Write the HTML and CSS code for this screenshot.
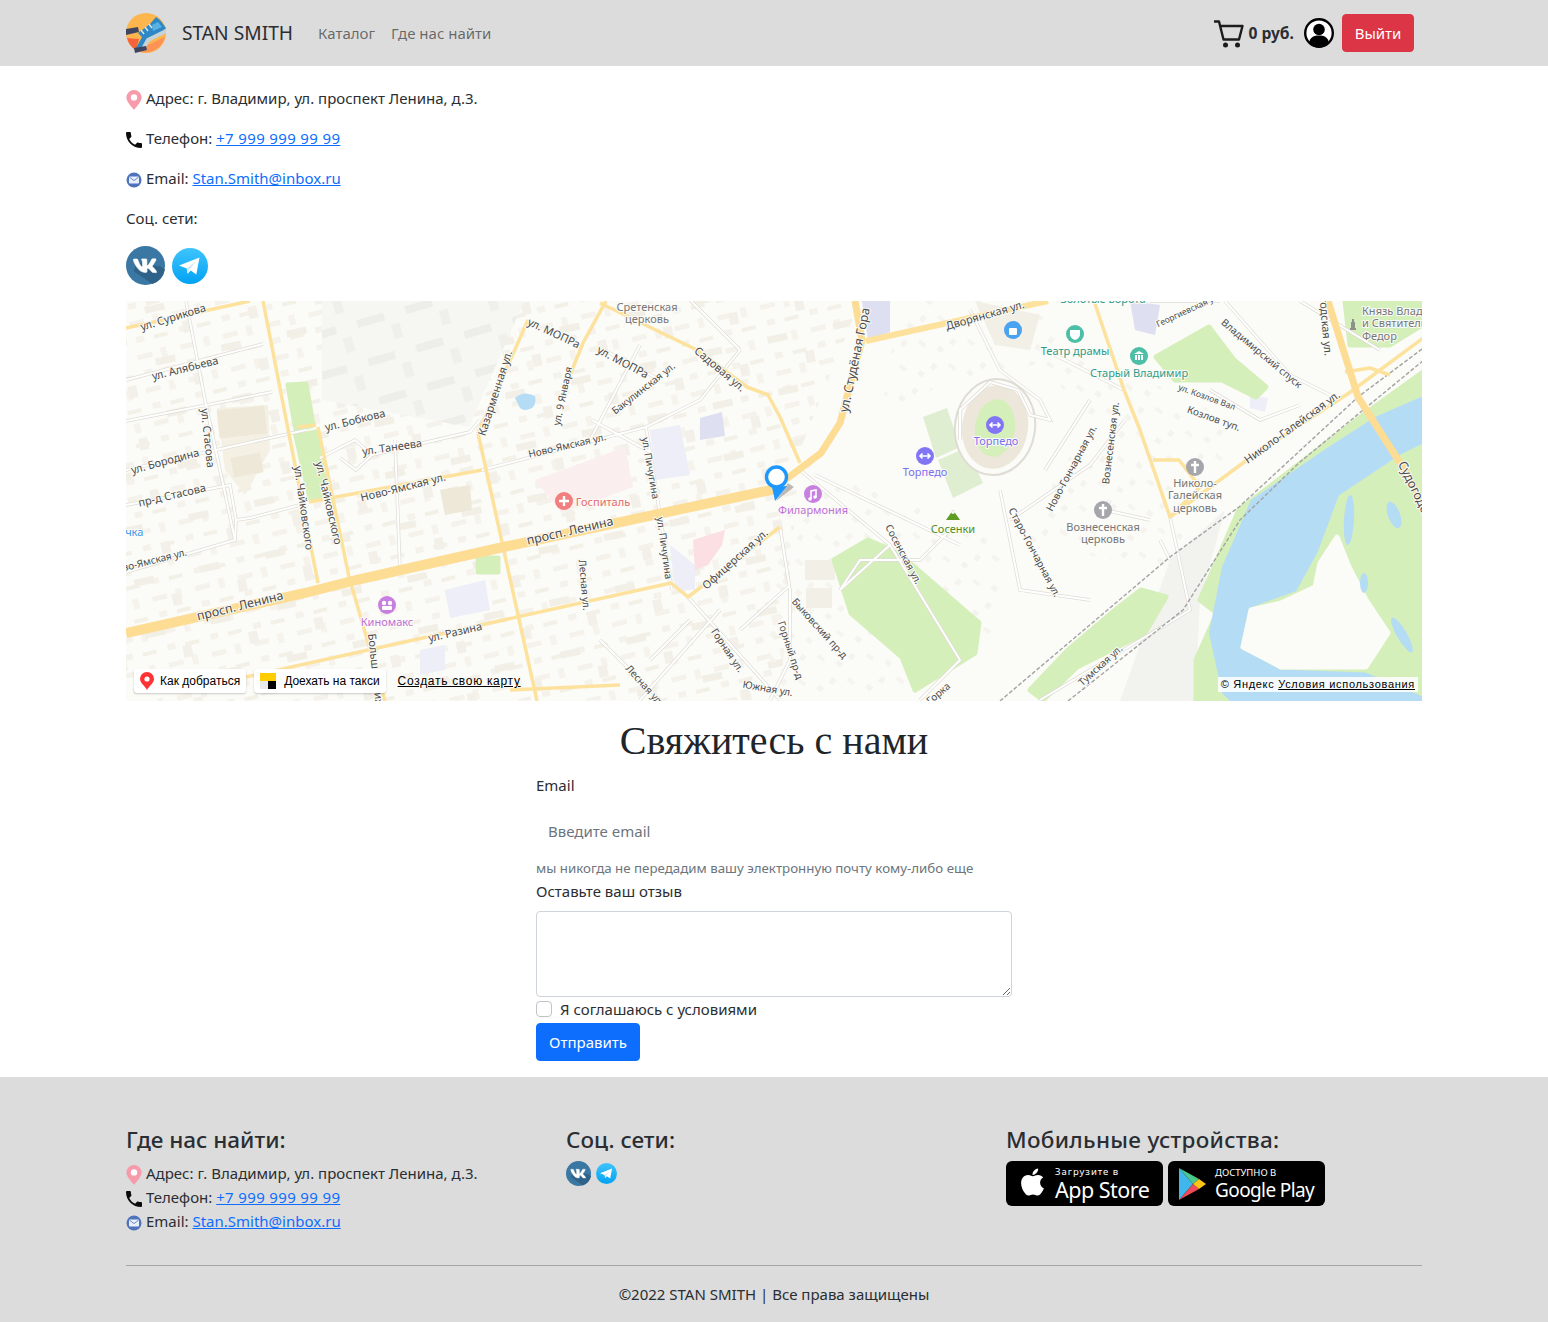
FILE: index.html
```html
<!DOCTYPE html>
<html lang="ru">
<head>
<meta charset="utf-8">
<title>STAN SMITH</title>
<link rel="stylesheet" href="styles.css">
</head>
<body>
<svg class="sprite" width="0" height="0" aria-hidden="true">
  <defs>
    <linearGradient id="tgGrad" x1="0" y1="0" x2="0" y2="1"><stop offset="0" stop-color="#3fc4fd"/><stop offset="1" stop-color="#02a2f3"/></linearGradient>
    <symbol id="i-pin" viewBox="0 0 16 20"><path fill="#f79aaa" d="M8 0a7.600 7.600 0 0 0-7.600 7.600C.4 12 5.500 16.600 8 20c2.500-3.400 7.600-8 7.600-12.400A7.600 7.600 0 0 0 8 0z"/><circle cx="8" cy="7.400" r="3.200" fill="#fff"/></symbol>
    <symbol id="i-phone" viewBox="3 3 18 18"><path fill="#0b0b0b" d="M6.620 10.790c1.440 2.830 3.760 5.140 6.590 6.590l2.200-2.200c.27-.27.67-.36 1.020-.24 1.120.37 2.330.57 3.570.57.550 0 1 .45 1 1V20c0 .55-.45 1-1 1-9.390 0-17-7.610-17-17 0-.55.45-1 1-1h3.500c.55 0 1 .45 1 1 0 1.250.2 2.450.57 3.570.11.35.03.74-.25 1.020l-2.200 2.200z"/></symbol>
    <symbol id="i-mail" viewBox="0 0 16 16"><circle cx="8" cy="8" r="7.500" fill="#4f72bd"/><rect x="3" y="4.600" width="10" height="7" rx="1" fill="#e8eefb"/><path d="M3.300 5l4.700 3.600L12.700 5" fill="none" stroke="#6d8cce" stroke-width="1"/></symbol>
    <symbol id="i-vk" viewBox="0 0 40 40"><circle cx="20" cy="20" r="20" fill="#3a77a3"/><path fill="#2f6288" d="M8 26l3-9 24 4 5 3a20 20 0 0 1-13 15z"/><g transform="translate(-1.900 -1.800) scale(1.780)"><path fill="#fff" stroke="#fff" stroke-width=".35" d="M18.150 16.270h-1.460c-.55 0-.72-.44-1.710-1.440-.86-.83-1.240-.94-1.450-.94-.3 0-.38.08-.38.49v1.310c0 .35-.11.56-1.050.56-1.550 0-3.270-.94-4.480-2.690C5.800 11.100 5.310 9.280 5.310 8.910c0-.21.08-.4.49-.4h1.460c.37 0 .51.16.65.56.72 2.090 1.920 3.920 2.410 3.920.19 0 .27-.08.27-.56v-2.210c-.06-1-.59-1.090-.59-1.440 0-.17.14-.34.37-.34h2.300c.31 0 .42.16.42.53v2.880c0 .31.14.42.23.42.19 0 .34-.11.68-.45 1.050-1.180 1.800-3 1.800-3 .1-.21.27-.41.64-.41h1.460c.44 0 .53.23.44.53-.18.85-1.980 3.380-1.980 3.380-.16.25-.22.37 0 .65.16.21.68.67 1.030 1.070.64.73 1.130 1.350 1.270 1.770.13.43-.09.65-.52.65z"/></g></symbol>
    <symbol id="i-tg" viewBox="0 0 36 36"><circle cx="18" cy="18" r="18" fill="url(#tgGrad)"/><path fill="#fff" d="M7 17.500L27.500 9.500 24.300 26.500 18.800 22.600 15.600 25.800 14.800 20.500z"/><path fill="#cfe8f7" d="M14.800 20.500l9.500-7.400-7 8.600-1.700 4.100z"/></symbol>
  </defs>
</svg>

<nav class="navbar">
  <div class="nav-inner">
    <a class="brand" href="#">
      <svg class="logo" viewBox="0 0 40 40">
        <circle cx="20" cy="20" r="20" fill="#fdb54e"/>
        <path d="M6 34L24 31 39 24A20 20 0 0 1 6 34z" fill="#ff9356"/>
        <path d="M1 25l12 1-3 11A20 20 0 0 1 1 25z" fill="#f8633c"/>
        <path d="M12 20L24 11 30 4l4 3 6 8-4 4-14 6-4 10-8 0 6-11z" fill="#2f88c6"/>
        <path d="M26 12l6-3 4 5-9 4z" fill="#58b1e0"/>
        <path d="M17 36l5-9 18-9" fill="none" stroke="#c5d3d8" stroke-width="4"/>
        <path d="M19 14l3 4M23 11l3 4M15 17l3 4" stroke="#d6e8f2" stroke-width="1.400"/>
        <path d="M0 16l12-2 1 5-13 3zM8 35l12-2 1 4-12 3z" fill="#3e4560"/>
      </svg>
      <span class="brand-name">STAN SMITH</span>
    </a>
    <ul class="nav-links">
      <li><a href="#">Каталог</a></li>
      <li><a href="#">Где нас найти</a></li>
    </ul>
    <div class="nav-right">
      <svg class="cart" viewBox="0 0 30 28"><path d="M0 1.500h5l4.500 18h15.500l3.500-13.500H6.500" fill="none" stroke="#1c1c1c" stroke-width="2.400" stroke-linejoin="round"/><circle cx="11.500" cy="25" r="2.500" fill="#1c1c1c"/><circle cx="23.500" cy="25" r="2.500" fill="#1c1c1c"/></svg>
      <span class="cart-sum">0 руб.</span>
      <svg class="user" viewBox="0 0 30 30"><circle cx="15" cy="15" r="13.800" fill="#fff" stroke="#000" stroke-width="2.400"/><circle cx="15" cy="11.500" r="5.800" fill="#000"/><path d="M5 25c1-6 5-7.500 10-7.500s9 1.500 10 7.500a13 13 0 0 1-20 0z" fill="#000"/></svg>
      <a class="btn btn-danger" href="#">Выйти</a>
    </div>
  </div>
</nav>

<main class="container">
  <p class="info"><svg class="ic"><use href="#i-pin"/></svg>Адрес: г. Владимир, ул. проспект Ленина, д.3.</p>
  <p class="info"><svg class="ic"><use href="#i-phone"/></svg>Телефон: <a class="tel" href="#">+7 999 999 99 99</a></p>
  <p class="info"><svg class="ic"><use href="#i-mail"/></svg>Email: <a href="#">Stan.Smith@inbox.ru</a></p>
  <p class="info">Соц. сети:</p>
  <div class="socials">
    <svg class="vk-big"><use href="#i-vk"/></svg>
    <svg class="tg-big"><use href="#i-tg"/></svg>
  </div>

  <div class="map">
    <svg class="map-svg" viewBox="126 301 1296 400" preserveAspectRatio="none">
      <defs>
        <pattern id="blocksA" width="44" height="34" patternUnits="userSpaceOnUse" patternTransform="rotate(-14)">
          <rect x="3" y="4" width="15" height="5" fill="#f5f2eb"/><rect x="27" y="2" width="6" height="10" fill="#f6f3ed"/><rect x="6" y="20" width="8" height="6" fill="#f5f2eb"/><rect x="24" y="22" width="14" height="4" fill="#f3f0e8"/>
        </pattern>
        <pattern id="blocksA2" width="67" height="53" patternUnits="userSpaceOnUse" patternTransform="rotate(-12)">
          <rect x="10" y="12" width="20" height="7" fill="#f2efe7"/><rect x="44" y="34" width="9" height="12" fill="#f3f0e9"/>
        </pattern>
        <pattern id="blocksB" width="38" height="31" patternUnits="userSpaceOnUse" patternTransform="rotate(38)">
          <rect x="3" y="4" width="6" height="5" fill="#f5f3ee"/><rect x="22" y="11" width="8" height="4" fill="#f6f4ef"/><rect x="9" y="21" width="5" height="6" fill="#f5f3ee"/>
        </pattern>
        <pattern id="blocksC" width="50" height="40" patternUnits="userSpaceOnUse" patternTransform="rotate(-16)">
          <rect x="4" y="6" width="28" height="8" fill="#ededea"/><rect x="36" y="20" width="9" height="15" fill="#efefec"/>
        </pattern>
        <g id="minorRoads" fill="none">
          <path d="M126 380L263 344M126 421L272 392M126 470L306 430M126 505L230 485 236 520 250 518 300 505M126 572L235 540 236 520"/>
          <path d="M186 301L205 400 235 540M320 458L355 440 372 455 356 470 340 458M372 455L470 432M395 440L400 570 520 545M470 432L480 420"/>
          <path d="M482 470L646 427 700 400 740 350M646 427L672 590M640 345L590 440M592 420L650 452M690 300L740 350M604 350L660 380"/>
          <path d="M688 597L780 700M720 610L640 700M740 630L790 585M780 527L790 590 790 660 770 700M660 700L600 640M650 660L690 620"/>
          <path d="M800 470L890 545 960 660 920 700M815 475L960 545M890 545L840 590 860 560 920 560 950 530M1000 490L1020 590 1090 600M1010 520L1090 465 1125 420M1045 470L1090 400M1110 500L1105 510 1150 520"/>
          <path d="M970 310L1000 370 1040 400 1050 420 1030 415 1018 390 990 382 960 410 960 440M1055 355L1124 390M1170 517L1190 610 1040 700M1170 560L1160 540M1210 390L1260 420 1300 405M1225 301L1290 375 1340 400M1150 301L1220 301M1300 301L1380 350"/>
        </g>
      </defs>

      <rect class="m-bg" x="126" y="301" width="1296" height="400"/>
      <polygon fill="url(#blocksA)" points="126,301 860,301 800,450 780,700 126,701"/>
      <polygon fill="url(#blocksA2)" points="126,301 860,301 800,450 780,700 126,701"/>
      <polygon fill="url(#blocksB)" points="780,450 1000,540 1000,640 880,701 760,701"/>
      <polygon fill="url(#blocksB)" points="1020,340 1200,400 1240,450 1160,570 1020,540 1090,420"/>
      <polygon fill="url(#blocksB)" points="900,301 1050,301 1060,360 950,380 880,420"/>
      <polygon class="m-gray" points="322,301 524,301 469,427 322,400"/>
      <polygon fill="url(#blocksC)" points="322,301 524,301 469,427 322,400"/>
      <polygon class="m-gray2" points="1170,560 1225,510 1200,600 1195,701 1120,701"/>

      <!-- districts and buildings -->
      <polygon class="m-pink" points="535,480 625,447 633,487 562,513"/>
      <polygon class="m-tan" points="217,408 268,405 270,450 245,495 225,470"/>
      <rect class="m-brown" x="218" y="408" width="48" height="28" transform="rotate(-6 242 422)"/>
      <rect class="m-brown" x="232" y="455" width="30" height="20" transform="rotate(-10 247 465)"/>
      <polygon class="m-brown" points="440,490 470,485 472,510 445,515"/>
      <polygon class="m-lav" points="650,430 680,425 690,475 655,480"/>
      <polygon class="m-lav" points="445,590 485,580 490,610 450,618"/>
      <polygon class="m-lav" points="670,545 695,565 695,590 675,590"/>
      <polygon class="m-lav" points="420,650 445,645 445,670 420,675"/>
      <polygon class="m-lav2" points="700,418 722,412 725,436 700,440"/>
      <polygon class="m-lav2" points="862,301 890,301 890,332 868,340"/>
      <polygon class="m-pinkb" points="693,540 725,530 722,545 708,565 695,570"/>
      <polygon class="m-beige" points="975,301 1040,315 1030,350 995,345"/>
      <polygon class="m-lav2" points="1130,301 1160,305 1155,335 1135,330"/>
      <polygon class="m-lav" points="1250,395 1268,398 1265,412 1250,408"/>
      <rect class="m-beige" x="805" y="560" width="30" height="20"/>
      <rect class="m-beige" x="806" y="588" width="26" height="20"/>

      <!-- parks -->
      <polygon class="m-green" points="288,385 306,384 313,425 296,430"/>
      <polygon class="m-green" points="296,436 316,432 327,495 310,498"/>
      <rect class="m-green" x="478" y="558" width="20" height="14"/>
      <polygon class="m-green" points="834,560 868,540 898,553 979,623 975,653 915,690 902,657 851,613"/>
      <polygon class="m-green" points="1030,690 1068,650 1119,607 1141,590 1166,597 1145,633 1077,667 1043,700"/>
      <polygon class="m-green" points="1156,357 1209,327 1234,360 1266,387 1256,397 1222,380 1175,380"/>
      <polygon class="m-green" points="1345,301 1422,301 1422,325 1390,345 1350,345"/>
      <polygon class="m-green" points="1430,367 1366,413 1239,510 1200,600 1217,613 1196,660 1196,701 1230,701 1430,393"/>
      <polygon class="m-green-soft" points="923,417 947,408 960,447 936,458"/>
      <polygon class="m-green-soft" points="938,460 966,448 983,483 953,498"/>

      <!-- stadium -->
      <ellipse class="m-st-out" cx="995" cy="427" rx="40" ry="48" transform="rotate(8 995 427)"/>
      <ellipse class="m-st-ring" cx="995" cy="427" rx="33" ry="42" transform="rotate(8 995 427)"/>
      <ellipse class="m-st-in" cx="995" cy="428" rx="20" ry="29" transform="rotate(8 995 428)"/>

      <!-- water -->
      <polygon class="m-water" points="1430,393 1375,417 1324,450 1251,500 1222,567 1209,633 1222,693 1230,701 1430,701"/>
      <polygon class="m-green" points="1430,443 1401,457 1341,497 1320,553 1298,593 1251,610 1243,647 1281,667 1366,670 1430,697"/>
      <polygon class="m-island" points="1337,537 1320,563 1315,587 1281,603 1251,610 1243,647 1281,667 1324,667 1366,667 1388,633 1366,600 1349,567"/>
      <ellipse class="m-water" cx="1349" cy="520" rx="5" ry="25" transform="rotate(3 1349 520)"/>
      <ellipse class="m-water" cx="1394" cy="515" rx="6" ry="14" transform="rotate(-20 1394 515)"/>
      <ellipse class="m-water" cx="1364" cy="583" rx="4" ry="10"/>
      <ellipse class="m-water" cx="1402" cy="635" rx="5" ry="20" transform="rotate(-30 1402 635)"/>
      <path class="m-water" d="M515 398q9-8 20-2 2 8-3 12-8 4-12 0z"/>

      <!-- minor streets -->
      <use href="#minorRoads" class="r-case"/>
      <use href="#minorRoads" class="r-fill"/>

      <!-- rails -->
      <path class="r-rail" d="M1000 701L1170 557 1239 507 1358 397 1430 343"/>
      <path class="r-rail" d="M1068 701L1183 610 1240 520 1300 462 1430 355"/>

      <!-- yellow streets -->
      <g class="r-y3">
        <path d="M126 328L250 301"/>
        <path d="M263 301L318 583"/>
        <path d="M318 427L349 577 385 701"/>
        <path d="M298 427L316 425"/>
        <path d="M309 502L482 470"/>
        <path d="M528 320L478 433 537 701"/>
        <path d="M606 301L583 343 570 375"/>
        <path d="M600 303L697 350 747 387 768 395 780 417 800 463"/>
        <path d="M246 677L671 583 688 597 780 527"/>
        <path d="M510 690L620 685"/>
        <path d="M1094 301L1124 390 1140 430 1170 517 1200 487 1179 460 1153 460"/>
        <path d="M1170 517L1251 457 1349 393 1430 333"/>
        <path d="M1345 372L1370 368 1390 375"/>
      </g>
      <g class="r-y5">
        <path d="M866 341L947 323 1048 301"/>
      </g>
      <g class="r-y6">
        <path d="M855 301L862 340 840 423 821 453 789 477 765 492"/>
        <path d="M1328 301L1358 397 1409 477 1430 520"/>
      </g>
      <path class="r-y8" d="M126 633L305 593 356 580 499 548 780 488"/>

      <!-- street labels -->
      <g class="ml">
        <text x="173" y="321" transform="rotate(-17 173 317)">ул. Сурикова</text>
        <text x="185" y="372" transform="rotate(-14 185 368)">ул. Алябьева</text>
        <text x="355" y="424" transform="rotate(-14 355 420)">ул. Бобкова</text>
        <text x="392" y="451" transform="rotate(-8 392 447)">ул. Танеева</text>
        <text x="165" y="465" transform="rotate(-15 165 461)">ул. Бородина</text>
        <text x="172" y="499" transform="rotate(-13 172 495)">пр-д Стасова</text>
        <text x="208" y="442" transform="rotate(84 208 438)">ул. Стасова</text>
        <text x="304" y="512" transform="rotate(82 304 508)">ул. Чайковского</text>
        <text x="329" y="507" transform="rotate(77 329 503)">ул. Чайковского</text>
        <text x="403" y="491" transform="rotate(-14 403 487)">Ново-Ямская ул.</text>
        <text class="ml-md" x="567" y="449" transform="rotate(-13 567 445)">Ново-Ямская ул.</text>
        <text class="ml-md" x="148" y="565" transform="rotate(-14 148 561)">Ново-Ямская ул.</text>
        <text x="495" y="397" transform="rotate(-72 495 393)">Казарменная ул.</text>
        <text x="554" y="337" transform="rotate(25 554 333)">ул. МОПРа</text>
        <text x="623" y="366" transform="rotate(28 623 362)">ул. МОПРа</text>
        <text class="ml-md" x="562" y="400" transform="rotate(-78 562 396)">ул. 9 Января</text>
        <text class="ml-md" x="643" y="392" transform="rotate(-38 643 388)">Бакулинская ул.</text>
        <text x="720" y="373" transform="rotate(40 720 369)">Садовая ул.</text>
        <text class="ml-lg" x="855" y="364" transform="rotate(-78 855 360)">ул. Студёная Гора</text>
        <text x="985" y="319" transform="rotate(-16 985 315)">Дворянская ул.</text>
        <text class="ml-lg" x="240" y="610" transform="rotate(-14 240 606)">просп. Ленина</text>
        <text class="ml-lg" x="570" y="535" transform="rotate(-13 570 531)">просп. Ленина</text>
        <text class="ml-md" x="651" y="472" transform="rotate(80 651 468)">ул. Пичугина</text>
        <text class="ml-md" x="665" y="552" transform="rotate(82 665 548)">ул. Пичугина</text>
        <text class="ml-md" x="585" y="589" transform="rotate(85 585 585)">Лесная ул.</text>
        <text x="455" y="636" transform="rotate(-13 455 632)">ул. Разина</text>
        <text class="ml-start" x="368" y="634" transform="rotate(84 368 634)">Большая Нижегородская ул.</text>
        <text x="735" y="563" transform="rotate(-42 735 559)">Офицерская ул.</text>
        <text class="ml-md" x="728" y="654" transform="rotate(56 728 650)">Горная ул.</text>
        <text class="ml-md" x="645" y="689" transform="rotate(48 645 685)">Лесная ул.</text>
        <text class="ml-md" x="768" y="692" transform="rotate(10 768 688)">Южная ул.</text>
        <text class="ml-md" x="791" y="654" transform="rotate(72 791 650)">Горный пр-д</text>
        <text class="ml-md" x="820" y="632" transform="rotate(48 820 628)">Быковский пр-д</text>
        <text class="ml-md" x="904" y="558" transform="rotate(62 904 554)">Сосенская ул.</text>
        <text class="ml-md" x="1035" y="556" transform="rotate(62 1035 552)">Старо-Гончарная ул.</text>
        <text class="ml-md" x="1071" y="472" transform="rotate(-62 1071 468)">Ново-Гончарная ул.</text>
        <text class="ml-md" x="1110" y="447" transform="rotate(-83 1110 443)">Вознесенская ул.</text>
        <text class="ml-md" x="1100" y="669" transform="rotate(-42 1100 665)">Тумская ул.</text>
        <text x="1292" y="431" transform="rotate(-36 1292 427)">Николо-Галейская ул.</text>
        <text class="ml-md" x="1214" y="422" transform="rotate(20 1214 418)">Козлов туп.</text>
        <text class="ml-sm" x="1207" y="400" transform="rotate(20 1207 397)">ул. Козлов Вал</text>
        <text class="ml-md" x="1262" y="357" transform="rotate(40 1262 353)">Владимирский спуск</text>
        <text class="ml-sm" x="1188" y="313" transform="rotate(-25 1188 310)">Георгиевская ул.</text>
        <text x="1325" y="318" transform="rotate(85 1325 314)">Судогодская ул.</text>
        <text class="ml-lg" x="1418" y="500" transform="rotate(64 1418 496)">Судогодское</text>
        <text class="ml-md" x="938" y="697" transform="rotate(-40 938 693)">Горка</text>
      </g>

      <!-- places -->
      <text class="p-blue" x="128" y="536">Речка</text>
      <text class="p-gray" x="647" y="311">Сретенская</text>
      <text class="p-gray" x="647" y="323">церковь</text>
      <circle class="c-red" cx="564" cy="501" r="9"/>
      <path class="c-mark" d="M564 496v10M559 501h10"/>
      <text class="p-red" x="603" y="506">Госпиталь</text>
      <circle class="c-mag" cx="387" cy="605" r="9"/>
      <circle class="c-dot" cx="384" cy="603" r="2.200"/><circle class="c-dot" cx="390" cy="603" r="2.200"/><rect class="c-dotr" x="382" y="606" width="10" height="4" rx="1"/>
      <text class="p-mag" x="387" y="626">Киномакс</text>
      <circle class="c-mag" cx="813" cy="494" r="9"/>
      <path class="c-mark2" d="M811 499v-8l5-1v7"/><circle class="c-dot" cx="810" cy="499" r="1.800"/><circle class="c-dot" cx="815" cy="497" r="1.800"/>
      <text class="p-mag" x="813" y="514">Филармония</text>
      <circle class="c-vio" cx="995" cy="425" r="9"/>
      <path class="c-mark2" d="M990 425h10M992.500 422.500L990 425l2.500 2.500M997.500 422.500L1000 425l-2.500 2.500"/>
      <text class="p-vio" x="996" y="445">Торпедо</text>
      <circle class="c-vio" cx="925" cy="456" r="9"/>
      <path class="c-mark2" d="M920 456h10M922.500 453.500L920 456l2.500 2.500M927.500 453.500L930 456l-2.500 2.500"/>
      <text class="p-vio" x="925" y="476">Торпедо</text>
      <path class="c-grn" d="M946 520l7-10 7 10z"/>
      <path class="c-dotr" d="M951 513l2-3 2 3-2 1z"/>
      <text class="p-grn" x="953" y="533">Сосенки</text>
      <circle class="c-blue" cx="1013" cy="330" r="9"/>
      <rect class="c-dotr" x="1009" y="328" width="8" height="7" rx="1"/>
      <circle class="c-teal" cx="1075" cy="334" r="9"/>
      <path class="c-dotr" d="M1070 330h10v5q-1 4-5 5-4-1-5-5z"/>
      <text class="p-teal" x="1075" y="355">Театр драмы</text>
      <circle class="c-teal" cx="1139" cy="356" r="9"/>
      <path class="c-dotr" d="M1134 354l5-3 5 3zM1135 355h2v5h-2zM1138 355h2v5h-2zM1141 355h2v5h-2z"/>
      <text class="p-teal" x="1139" y="377">Старый Владимир</text>
      <text class="p-teal" x="1103" y="303">Золотые ворота</text>
      <circle class="c-gray" cx="1195" cy="467" r="9"/>
      <path class="c-mark" d="M1195 461v12M1191 465h8"/>
      <text class="p-gray" x="1195" y="487">Николо-</text>
      <text class="p-gray" x="1195" y="499">Галейская</text>
      <text class="p-gray" x="1195" y="512">церковь</text>
      <circle class="c-gray" cx="1103" cy="510" r="9"/>
      <path class="c-mark" d="M1103 504v12M1099 508h8"/>
      <text class="p-gray" x="1103" y="531">Вознесенская</text>
      <text class="p-gray" x="1103" y="543">церковь</text>
      <text class="p-gray p-left" x="1362" y="315">Князь Влад</text>
      <text class="p-gray p-left" x="1362" y="327">и Святители</text>
      <text class="p-gray p-left" x="1362" y="340">Федор</text>
      <path class="c-statue" d="M1350 330h6v-2h-1v-6h-1v-3h-2v3h-1v6h-1z"/>

      <!-- marker -->
      <path class="pin-shadow" d="M776 501l12-18 6 4z"/>
      <path class="pin-tail" d="M775 501l-3-14 15-1z"/>
      <circle class="pin-ring" cx="776.500" cy="477" r="10"/>
    </svg>
    <div class="map-controls">
      <a class="map-btn" href="#"><svg class="map-ic" viewBox="0 0 14 18"><path fill="#f33" d="M7 0a7 7 0 0 0-7 7c0 4 5 7 7 11 2-4 7-7 7-11a7 7 0 0 0-7-7z"/><circle cx="7" cy="7" r="2.600" fill="#fff"/></svg>Как добраться</a>
      <a class="map-btn" href="#"><svg class="map-ic map-ic-taxi" viewBox="0 0 16 16"><rect width="16" height="8" fill="#fc0"/><rect y="8" width="8" height="8" fill="#e8e8e8"/><rect x="8" y="8" width="8" height="8" fill="#000"/></svg>Доехать на такси</a>
      <a class="map-link" href="#">Создать свою карту</a>
    </div>
    <div class="map-copy">© Яндекс <a href="#">Условия использования</a></div>
  </div>

  <h1 class="title">Свяжитесь с нами</h1>
  <form class="form">
    <label class="lbl lbl-email" for="em">Email</label>
    <input class="input" id="em" type="email" placeholder="Введите email">
    <div class="hint">мы никогда не передадим вашу электронную почту кому-либо еще</div>
    <label class="lbl" for="fb">Оставьте ваш отзыв</label>
    <textarea class="area" id="fb"></textarea>
    <div class="check"><input class="check-box" type="checkbox" id="ag"><label for="ag">Я соглашаюсь с условиями</label></div>
    <button class="btn btn-primary" type="button">Отправить</button>
  </form>
</main>

<footer class="footer">
  <div class="container">
    <div class="foot-grid">
      <div>
        <h4 class="foot-h">Где нас найти:</h4>
        <div class="info-f"><svg class="ic"><use href="#i-pin"/></svg>Адрес: г. Владимир, ул. проспект Ленина, д.3.</div>
        <div class="info-f"><svg class="ic"><use href="#i-phone"/></svg>Телефон: <a class="tel" href="#">+7 999 999 99 99</a></div>
        <div class="info-f"><svg class="ic"><use href="#i-mail"/></svg>Email: <a href="#">Stan.Smith@inbox.ru</a></div>
      </div>
      <div>
        <h4 class="foot-h">Соц. сети:</h4>
        <div class="socials-f">
          <svg class="vk-sm"><use href="#i-vk"/></svg>
          <svg class="tg-sm"><use href="#i-tg"/></svg>
        </div>
      </div>
      <div>
        <h4 class="foot-h foot-h-wide">Мобильные устройства:</h4>
        <div class="stores">
          <a class="store" href="#">
            <svg class="apple" viewBox="3 2 18 20"><path fill="#fff" d="M17.050 20.280c-.98.95-2.050.8-3.080.35-1.090-.46-2.090-.48-3.240 0-1.440.62-2.200.44-3.060-.35C2.790 15.250 3.510 7.590 9.050 7.310c1.350.07 2.290.74 3.080.8 1.180-.24 2.310-.93 3.570-.84 1.510.12 2.650.72 3.400 1.800-3.120 1.870-2.380 5.980.48 7.130-.57 1.500-1.310 2.990-2.540 4.090zM12.030 7.250c-.15-2.230 1.660-4.070 3.740-4.250.29 2.580-2.340 4.500-3.740 4.250z"/></svg>
            <span class="store-txt"><span class="store-sm store-sm-a">Загрузите в</span><span class="store-lg store-lg-a">App Store</span></span>
          </a>
          <a class="store store-g" href="#">
            <svg class="gplay" viewBox="0 0 27 32"><path fill="#3fb6ec" d="M0 0l14 16L0 32z"/><path fill="#4dc88d" d="M0 0l20 11-6 5z"/><path fill="#ee4a57" d="M0 32l20-11-6-5z"/><path fill="#fcc419" d="M20 11l7 5-7 5-6-5z"/></svg>
            <span class="store-txt"><span class="store-sm store-sm-g">ДОСТУПНО В</span><span class="store-lg">Google Play</span></span>
          </a>
        </div>
      </div>
    </div>
    <hr class="rule">
    <div class="copy">©2022 STAN SMITH | Все права защищены</div>
  </div>
</footer>
</body>
</html>
```
FILE: styles.css
```css
* { box-sizing: border-box; }
html, body { margin: 0; padding: 0; }
body { font-family: "Noto Sans", "Open Sans", sans-serif; font-size: 15px; line-height: 24px; color: #2a2e32; background: #fff; }
a { color: #0d6efd; }
.tel { letter-spacing: 0.35px; }
.sprite { position: absolute; }

/* navbar */
.navbar { background: #dcdcdc; height: 66px; }
.nav-inner { width: 1296px; margin: 0 auto; height: 66px; display: flex; align-items: center; }
.brand { display: flex; align-items: center; text-decoration: none; color: #2a2e32; }
.logo { width: 40px; height: 40px; display: block; }
.brand-name { font-size: 19.2px; margin-left: 16px; }
.nav-links { display: flex; list-style: none; margin: 0 0 0 25px; padding: 0; gap: 16px; }
.nav-links a { color: rgba(0,0,0,.55); text-decoration: none; }
.nav-right { margin-left: auto; margin-right: 8px; display: flex; align-items: center; }
.cart { width: 30px; height: 28px; margin-top: 1px; }
.cart-sum { font-weight: 700; font-size: 15.6px; margin-left: 5px; margin-right: 10px; }
.user { width: 30px; height: 30px; }
.btn { display: inline-flex; align-items: center; justify-content: center; height: 38px; border: 1px solid; border-radius: 4px; color: #fff; text-decoration: none; font: inherit; }
.btn-danger { background: #dc3545; border-color: #dc3545; width: 72px; margin-left: 8px; }
.btn-primary { background: #0d6efd; border-color: #0d6efd; width: 104px; margin-top: 2px; }

/* contact */
.container { width: 1296px; margin: 0 auto; }
main.container { padding-top: 20px; }
.info { margin: 0 0 16px; }
.ic { width: 16px; height: 20px; margin-right: 4px; vertical-align: -6px; }
.socials { display: flex; align-items: center; gap: 7px; height: 39px; margin-bottom: 16px; }
.vk-big { width: 39px; height: 39px; }
.tg-big { width: 36px; height: 36px; }

/* map */
.map { position: relative; height: 400px; overflow: hidden; background: #fbfbf7; }
.map-svg { display: block; width: 1296px; height: 400px; font-family: "Noto Sans", sans-serif; }
.m-bg { fill: #fbfbf7; }
.m-island { fill: #fbfbf7; stroke: #fbfbf7; stroke-width: 5; stroke-linejoin: round; }
.m-gray { fill: #f6f6f3; }
.m-gray2 { fill: #f2f2ef; }
.m-pink { fill: #fbeeee; }
.m-pinkb { fill: #fbdfe2; }
.m-tan { fill: #f5f0e4; }
.m-brown { fill: #eee8d9; }
.m-lav { fill: #eeeef8; }
.m-lav2 { fill: #dedff0; }
.m-beige { fill: #f2efe6; }
.m-green { fill: #d5efba; stroke: #d5efba; stroke-width: 5; stroke-linejoin: round; }
.m-green-soft { fill: #dfeed0; }
.m-water { fill: #b5dcf5; }
.m-st-out { fill: #fbfbf7; stroke: #dedcd4; stroke-width: 2; }
.m-st-ring { fill: #ece7da; }
.m-st-in { fill: #d5efba; }
.r-case { stroke: #dedcd5; stroke-width: 3.4; }
.r-fill { stroke: #ffffff; stroke-width: 2; }
.r-rail { fill: none; stroke: #a3a3a3; stroke-width: 1.4; stroke-dasharray: 4 2; }
.r-y3, .r-y5, .r-y6 { fill: none; stroke: #fde29d; stroke-linejoin: round; }
.r-y3 { stroke-width: 3.5; }
.r-y5 { stroke-width: 6; }
.r-y6 { stroke-width: 7; stroke: #fddc94; }
.r-y8 { fill: none; stroke: #fddc94; stroke-width: 10; }
.ml text { font-size: 11px; fill: #4b4b4b; text-anchor: middle; stroke: #fbfbf7; stroke-width: 2; paint-order: stroke; }
.ml .ml-sm { font-size: 8.5px; }
.ml .ml-md { font-size: 10px; }
.ml .ml-lg { font-size: 12.5px; }
.ml .ml-start { text-anchor: start; }
.p-gray, .p-red, .p-mag, .p-vio, .p-grn, .p-teal, .p-blue { font-size: 11px; text-anchor: middle; stroke: #fbfbf7; stroke-width: 2; paint-order: stroke; }
.p-gray { fill: #777; }
.p-left { text-anchor: start; }
.p-red { fill: #e56a6a; }
.p-mag { fill: #be6fd8; }
.p-vio { fill: #7b6ff0; }
.p-grn { fill: #4f8f1d; }
.p-teal { fill: #2f9b8a; }
.p-blue { fill: #3f97e6; }
.c-red { fill: #f17f7f; }
.c-mag { fill: #c77fe0; }
.c-vio { fill: #8275f5; }
.c-blue { fill: #4aa3f0; }
.c-teal { fill: #4cbfa6; }
.c-gray { fill: #a4a6ab; }
.c-grn { fill: #5e9c22; }
.c-statue { fill: #8f8f8f; }
.c-mark { fill: none; stroke: #fff; stroke-width: 2.4; }
.c-mark2 { fill: none; stroke: #fff; stroke-width: 1.6; }
.c-dot, .c-dotr { fill: #fff; }
.pin-shadow { fill: rgba(0,0,0,.25); }
.pin-tail { fill: #1e98ff; }
.pin-ring { fill: #fff; stroke: #1e98ff; stroke-width: 3.4; }

.map-controls { position: absolute; left: 8px; bottom: 8px; display: flex; align-items: center; gap: 8px; font: 12px/24px "Liberation Sans", sans-serif; color: #000; }
.map-btn { display: flex; align-items: center; height: 24px; padding: 0 6px; background: #fff; color: #000; text-decoration: none; border-radius: 3px; box-shadow: 0 1px 2px rgba(0,0,0,.2); }
.map-ic { width: 14px; height: 18px; margin-right: 6px; }
.map-ic-taxi { width: 16px; height: 16px; margin-right: 8px; }
.map-link { color: #000; margin-left: 4px; letter-spacing: 0.7px; }
.map-copy { position: absolute; right: 4px; bottom: 9px; height: 15px; padding: 0 3px; background: rgba(255,255,255,.85); font: 11px/15px "Liberation Sans", sans-serif; letter-spacing: 0.7px; color: #000; }
.map-copy a { color: #000; }

/* form */
.title { font-family: "Liberation Serif", serif; font-weight: 400; font-size: 40px; line-height: 48px; text-align: center; margin: 16px 0 8px; color: #212529; }
.form { width: 476px; margin: 0 auto 16px; }
.lbl { display: block; margin-bottom: 8px; }
.lbl-email { margin-bottom: 15px; }
.input { display: block; width: 100%; height: 38px; padding: 6px 11px; border: 1px solid #fff; border-radius: 4px; font: inherit; background: #fff; color: #212529; }
.input::placeholder { color: #6c757d; opacity: 1; }
.hint { font-size: 13.3px; line-height: 21px; color: #6c757d; margin-top: 8px; }
.area { display: block; width: 100%; height: 86px; padding: 6px 12px; border: 1px solid #ced4da; border-radius: 4px; font: inherit; resize: vertical; }
.check { display: flex; align-items: center; height: 24px; }
.check-box { appearance: none; width: 16px; height: 16px; margin: 0 8px 0 0; border: 1px solid #bfc4c9; border-radius: 4px; background: #fff; }

/* footer */
.footer { background: #dcdcdc; padding: 48px 0 16px; }
.foot-grid { display: grid; grid-template-columns: 440px 440px 1fr; }
.foot-h { font-size: 22.5px; line-height: 29px; font-weight: 500; margin: 0 0 7px; }
.foot-h-wide { letter-spacing: 0.3px; }
.socials-f { display: flex; align-items: center; gap: 5px; height: 25px; margin-top: 2px; }
.vk-sm { width: 25px; height: 25px; }
.tg-sm { width: 21px; height: 21px; }
.stores { display: flex; gap: 5px; }
.store { display: flex; align-items: center; width: 157px; height: 45px; background: #000; border-radius: 6px; color: #fff; text-decoration: none; padding-left: 13px; }
.store-g { padding-left: 11px; }
.apple { width: 27px; height: 32px; margin-right: 9px; margin-bottom: 3px; }
.gplay { width: 27px; height: 32px; margin-right: 9px; }
.store-txt { display: flex; flex-direction: column; }
.store-sm { font-size: 9.5px; line-height: 11px; margin-top: 1px; }
.store-sm-a { letter-spacing: 1px; }
.store-sm-g { letter-spacing: 0; }
.store-lg { font-size: 19px; line-height: 24px; letter-spacing: -0.6px; }
.store-lg-a { font-size: 21.5px; line-height: 25px; letter-spacing: -0.5px; }
.rule { border: 0; border-top: 1px solid #a5a5a5; margin: 32px 0 16px; height: 0; }
.copy { text-align: center; }
```
